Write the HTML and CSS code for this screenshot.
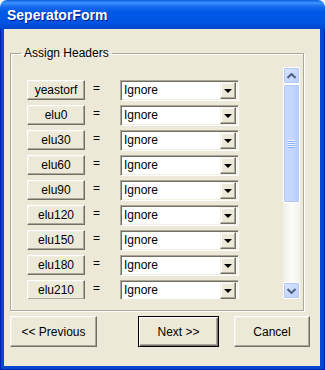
FILE: index.html
```html
<!DOCTYPE html>
<html>
<head>
<meta charset="utf-8">
<link rel="stylesheet" href="styles.css">
</head>
<body>
<div class="window">
  <div class="titlebar"><span class="title">SeperatorForm</span></div>
  <div class="frame">
    <div class="client">
      <fieldset class="group">
        <legend class="legend">Assign Headers</legend>
        <div class="panel">
          <div class="list">
            <div class="row"><button class="hbtn">yeastorf</button><span class="eq">=</span><div class="combo"><span class="ctext">Ignore</span><span class="cbtn"><span class="tri"></span></span></div></div>
            <div class="row"><button class="hbtn">elu0</button><span class="eq">=</span><div class="combo"><span class="ctext">Ignore</span><span class="cbtn"><span class="tri"></span></span></div></div>
            <div class="row"><button class="hbtn">elu30</button><span class="eq">=</span><div class="combo"><span class="ctext">Ignore</span><span class="cbtn"><span class="tri"></span></span></div></div>
            <div class="row"><button class="hbtn">elu60</button><span class="eq">=</span><div class="combo"><span class="ctext">Ignore</span><span class="cbtn"><span class="tri"></span></span></div></div>
            <div class="row"><button class="hbtn">elu90</button><span class="eq">=</span><div class="combo"><span class="ctext">Ignore</span><span class="cbtn"><span class="tri"></span></span></div></div>
            <div class="row"><button class="hbtn">elu120</button><span class="eq">=</span><div class="combo"><span class="ctext">Ignore</span><span class="cbtn"><span class="tri"></span></span></div></div>
            <div class="row"><button class="hbtn">elu150</button><span class="eq">=</span><div class="combo"><span class="ctext">Ignore</span><span class="cbtn"><span class="tri"></span></span></div></div>
            <div class="row"><button class="hbtn">elu180</button><span class="eq">=</span><div class="combo"><span class="ctext">Ignore</span><span class="cbtn"><span class="tri"></span></span></div></div>
            <div class="row"><button class="hbtn">elu210</button><span class="eq">=</span><div class="combo"><span class="ctext">Ignore</span><span class="cbtn"><span class="tri"></span></span></div></div>
          </div>
          <div class="scrollbar">
            <div class="sbtn"><svg width="9" height="6" viewBox="0 0 9 6"><path d="M0.5 5 L4.5 1 L8.5 5" fill="none" stroke="#4d6185" stroke-width="2"/></svg></div>
            <div class="thumb"><div class="grip"></div></div>
            <div class="track"></div>
            <div class="sbtn"><svg width="9" height="6" viewBox="0 0 9 6"><path d="M0.5 1 L4.5 5 L8.5 1" fill="none" stroke="#4d6185" stroke-width="2"/></svg></div>
          </div>
        </div>
      </fieldset>
      <div class="actions">
        <button class="dbtn prev">&lt;&lt; Previous</button>
        <button class="dbtn next">Next &gt;&gt;</button>
        <button class="dbtn cancel">Cancel</button>
      </div>
    </div>
  </div>
</div>
</body>
</html>
```
FILE: styles.css
```css
* { box-sizing: border-box; }
html, body { margin: 0; padding: 0; background: #ffffff; }
body { width: 325px; height: 370px; font-family: "Liberation Sans", Arial, sans-serif; font-size: 11px; color: #000; }
.window { width: 325px; height: 370px; display: flex; flex-direction: column; }
.titlebar {
  height: 29px;
  background: linear-gradient(#0a5fdf 0px, #3d95ff 3px, #1a6ef0 6px, #0058e6 12px, #0055e5 22px, #0046cc 29px);
  border-radius: 7px 7px 0 0;
  display: flex; align-items: center;
  padding-left: 7px;
}
.title { color: #fff; font-family: "Liberation Sans", Arial, sans-serif; font-weight: bold; font-size: 14px; text-shadow: 1px 1px 0 #0a1883; padding-top: 1px; }
.frame { flex: 1; display: flex; background: #0747d4; padding: 0 4px 3px 3px; border-left: 1px solid #0021b0; border-right: 1px solid #0021b0; border-bottom: 1px solid #0021b0; }
.client { flex: 1; background: #ece9d8; display: flex; flex-direction: column; padding: 18px 0 0 6px; }
.group {
  margin: 0; width: 294px; height: 264px;
  border: 1px solid #aca899;
  box-shadow: inset 1px 1px 0 #fff, 1px 1px 0 #fff;
  padding: 7px 0 0 5px;
}
.legend { padding: 0 3px; margin-left: 5px; font-size: 12px; line-height: 13px; }
.panel { display: flex; height: 232px; }
.list { width: 267px; padding: 13px 0 0 11px; display: flex; flex-direction: column; gap: 5px; overflow: hidden; }
.row { display: flex; align-items: center; height: 20px; flex: none; }
.hbtn {
  width: 58px; height: 20px; padding: 0; margin: 0;
  font-family: "Liberation Sans", Arial, sans-serif; font-size: 12px; color: #000;
  background: #ece9d8;
  border: 1px solid; border-color: #fff #716f64 #716f64 #fff;
  box-shadow: inset -1px -1px 0 #aca899, inset 1px 1px 0 #f1efe2;
}
.eq { width: 35px; padding-left: 8px; font-size: 12px; position: relative; top: -2px; }
.combo {
  width: 119px; height: 21px; display: flex; align-items: center; background: #fff;
  border: 1px solid; border-color: #aca899 #fff #fff #aca899;
  box-shadow: inset 1px 1px 0 #716f64, inset -1px -1px 0 #f1efe2;
  padding: 2px 2px 2px 3px;
}
.ctext { flex: 1; font-size: 12px; line-height: 15px; }
.cbtn {
  width: 16px; height: 17px; background: #ece9d8;
  border: 1px solid; border-color: #f1efe2 #716f64 #716f64 #f1efe2;
  box-shadow: inset -1px -1px 0 #aca899, inset 1px 1px 0 #fff;
  display: flex; align-items: center; justify-content: center;
}
.tri { width: 0; height: 0; border-left: 4px solid transparent; border-right: 4px solid transparent; border-top: 4px solid #000; margin-top: 1px; }
.scrollbar { width: 17px; height: 232px; display: flex; flex-direction: column; background: linear-gradient(90deg, #eeede5, #fdfdfa 50%, #f3f1ec); }
.sbtn {
  width: 17px; height: 17px; flex: none;
  background: linear-gradient(135deg, #dbe6fe, #b9cdfb);
  border: 1px solid #fff; border-radius: 2px;
  box-shadow: inset 0 0 0 1px #b4c8f6;
  display: flex; align-items: center; justify-content: center;
}
.thumb {
  height: 119px; flex: none;
  background: linear-gradient(90deg, #c9d8fc, #c6d7fd 50%, #b9cdfb);
  border: 1px solid #fff; border-radius: 2px;
  box-shadow: inset 0 0 0 1px #b4c8f6;
  display: flex; align-items: center; justify-content: center;
}
.grip { width: 7px; height: 8px; background: repeating-linear-gradient(#eef4fe 0 1px, #8cb0f8 1px 2px); }
.track { flex: 1; }
.actions { display: flex; margin-top: 5px; padding-left: 0; }
.dbtn {
  height: 31px; padding: 0; margin: 0;
  font-family: "Liberation Sans", Arial, sans-serif; font-size: 12px; color: #000;
  background: #ece9d8;
  border: 1px solid; border-color: #fff #716f64 #716f64 #fff;
  box-shadow: inset -1px -1px 0 #aca899, inset 1px 1px 0 #f1efe2;
}
.prev { width: 87px; }
.next { width: 81px; margin-left: 41px; border: 1px solid #000; box-shadow: inset 1px 1px 0 #fff, inset -1px -1px 0 #716f64, inset -2px -2px 0 #aca899; }
.cancel { width: 76px; margin-left: 15px; }
```
